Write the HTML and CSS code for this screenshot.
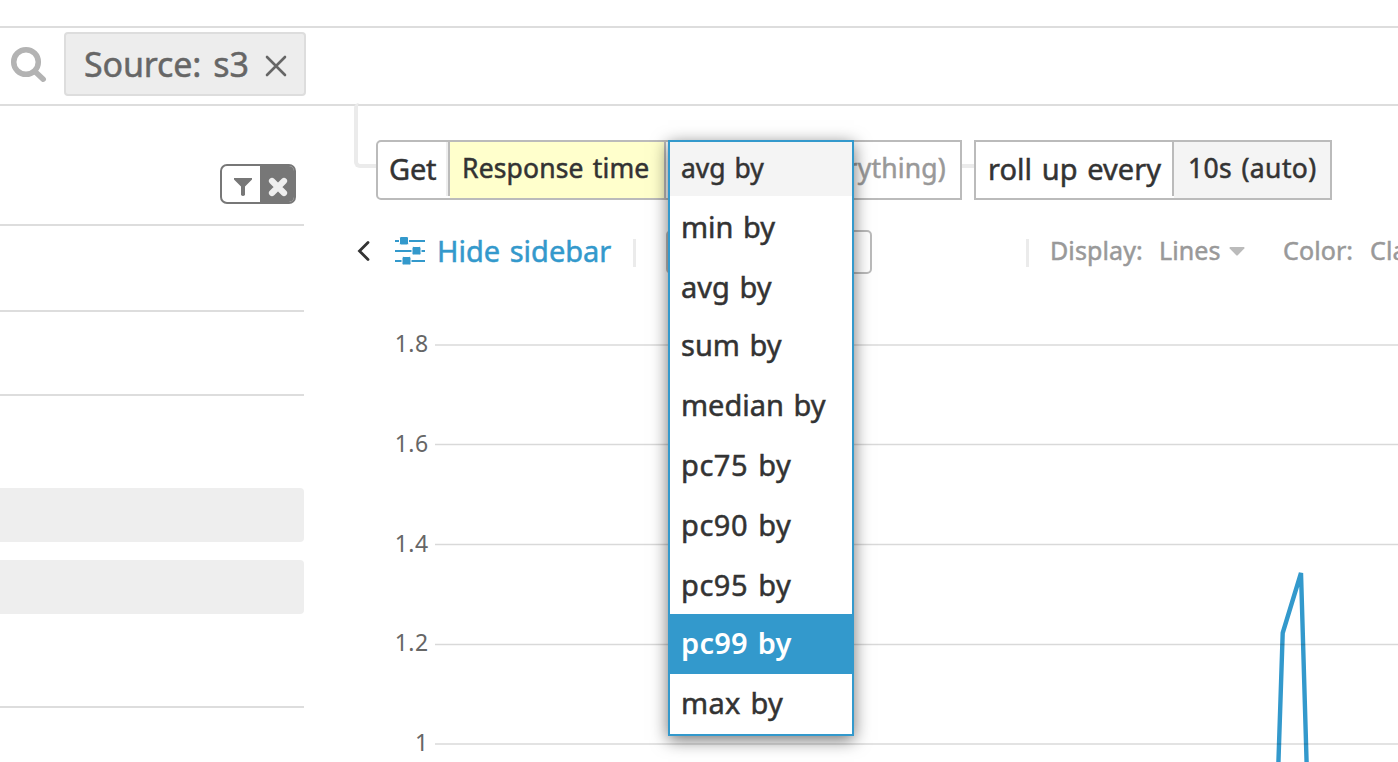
FILE: index.html
```html
<!DOCTYPE html>
<html lang="en">
<head>
<meta charset="utf-8">
<title>Metric query editor</title>
<link rel="stylesheet" href="styles.css">
</head>
<body>
<div class="page">
  <header class="searchbar">
    <svg class="search-icon" width="38" height="38" viewBox="0 0 38 38"><circle cx="16" cy="16" r="12.3"/><path d="M25 25.500L33.200 33.200"/></svg>
    <div class="tag"><span class="tag-text">Source: s3</span>
      <svg class="tag-close" width="22" height="22" viewBox="0 0 22 22"><path d="M2 2L20 20M20 2L2 20"/></svg>
    </div>
  </header>
  <div class="content">
    <aside class="sidebar">
      <div class="facet facet-head">
        <div class="toggle">
          <div class="toggle-filter"><svg width="20" height="20" viewBox="0 0 20 20"><path d="M1 1h18v1.500l-7 7v8.500q-2 1.800-4 0V9.500l-7-7z"/></svg></div>
          <div class="toggle-clear"><svg width="20" height="20" viewBox="0 0 20 20"><path d="M4 4L16 16M16 4L4 16"/></svg></div>
        </div>
      </div>
      <div class="facet facet-a"></div>
      <div class="facet facet-b"></div>
      <div class="facet facet-list"><div class="bar"></div><div class="bar"></div></div>
    </aside>
    <main class="main">
      <div class="bracket"></div>
      <div class="query">
        <div class="group group-get">
          <div class="cell cell-get"><span class="t-get">Get</span></div>
          <div class="cell cell-metric"><span class="t-metric">Response time</span></div>
          <div class="cell cell-scope"><span class="t-scope">(everything)</span></div>
        </div>
        <div class="link"></div>
        <div class="group group-roll">
          <div class="cell cell-roll"><span class="t-roll">roll up every</span></div>
          <div class="cell cell-auto"><span class="t-auto">10s (auto)</span></div>
        </div>
        <div class="menu">
          <div class="current">avg by</div>
          <div class="item i-min">min by</div>
          <div class="item i-avg">avg by</div>
          <div class="item i-sum">sum by</div>
          <div class="item i-med">median by</div>
          <div class="item i-pc">pc75 by</div>
          <div class="item i-pc">pc90 by</div>
          <div class="item i-pc">pc95 by</div>
          <div class="item active">pc99 by</div>
          <div class="item i-max">max by</div>
        </div>
      </div>
      <div class="tools">
        <svg class="chevron" width="14" height="20" viewBox="0 0 14 20"><path d="M11 1.500L2.500 10L11 18.500"/></svg>
        <svg class="sliders" width="30" height="28" viewBox="0 0 30 28"><path d="M0 4h30M0 14h30M0 24h30" stroke="#39c" stroke-width="2"/><g fill="#39c" stroke="#fff" stroke-width="1"><rect x="4.500" y="-.5" width="9" height="8.500" rx="1.500"/><rect x="17" y="9.500" width="9" height="8.500" rx="1.500"/><rect x="7" y="19.500" width="9" height="8.500" rx="1.500"/></g></svg>
        <span class="t-hide">Hide sidebar</span>
        <i class="divider"></i>
        <div class="field"></div>
        <i class="divider divider-right"></i>
        <span class="t-display">Display:</span>
        <span class="t-lines">Lines</span>
        <svg class="caret" width="16" height="9" viewBox="0 0 16 9"><path d="M1 0h14q1 .5.300 1.500L8.500 8.500h-1L.7 1.500Q0 .5 1 0z"/></svg>
        <span class="t-color">Color:</span>
        <span class="t-classic">Classic</span>
      </div>
      <svg class="chart" width="1044" height="482" viewBox="354 280 1044 482">
        <path class="series" d="M1278.300 766L1282.700 633L1301 573L1306.700 766"/>
        <path class="grid" d="M435 345h963M435 444.500h963M435 544.500h963M435 644.500h963M435 744h963"/>
        <g class="axis">
          <text x="428.500" y="352">1.8</text>
          <text x="428.500" y="452">1.6</text>
          <text x="428.500" y="552">1.4</text>
          <text x="428.500" y="651">1.2</text>
          <text x="428.500" y="751">1</text>
        </g>
      </svg>
    </main>
  </div>
</div>
</body>
</html>
```
FILE: styles.css
```css
* { box-sizing: border-box; }
body { margin: 0; background: #fff; font-family: "Noto Sans", "Open Sans", sans-serif; color: #333; -webkit-text-stroke: 0.5px currentColor; }
svg { display: block; flex: none; }
.page { width: 1398px; height: 762px; overflow: hidden; padding-top: 26px; }
.searchbar { height: 80px; border-top: 2px solid #ddd; border-bottom: 2px solid #ddd; display: flex; padding: 4px 0 0 10px; }
.search-icon { margin-top: 14px; fill: none; stroke: #b3b3b3; stroke-width: 5.5; stroke-linecap: round; }
.tag { margin-left: 16px; width: 242px; height: 64px; border: 2px solid #ddd; border-radius: 4px; background: #ededed; display: flex; align-items: center; padding-left: 18px; color: #666; }
.tag-text { width: 181px; font-size: 34px; line-height: 60px; letter-spacing: -0.15px; word-spacing: 3.5px; white-space: nowrap; }
.tag-close { margin-top: 4px; fill: none; stroke: #666; stroke-width: 2.6; stroke-linecap: round; }
.content { display: flex; height: 656px; }
.sidebar { width: 304px; flex: none; }
.facet { border-bottom: 2px solid #ddd; }
.facet-head { height: 120px; padding: 58px 8px 0 0; display: flex; justify-content: flex-end; align-items: flex-start; }
.facet-a { height: 86px; }
.facet-b { height: 84px; }
.facet-list { height: 312px; padding-top: 92px; display: flex; flex-direction: column; gap: 18px; }
.bar { height: 54px; background: #eee; border-radius: 0 4px 4px 0; }
.toggle { display: flex; width: 76px; height: 40px; border: 2px solid #777; border-radius: 7px; overflow: hidden; }
.toggle-filter { width: 38px; padding: 11px 0 0 11px; fill: #777; }
.toggle-clear { flex: 1; background: #777; padding: 11px 0 0 8px; stroke: #eee; stroke-width: 6.2; stroke-linecap: round; }
.main { width: 1044px; margin-left: 50px; flex: none; }
.bracket { width: 24px; height: 65px; margin-top: -3px; border: solid #ebebeb; border-width: 0 0 4px 4px; border-radius: 5px 0 0 6px; }
.query { position: relative; display: flex; margin: -28px 0 0 22px; height: 60px; }
.group { height: 60px; border: 2px solid #bbb; background: #fff; display: flex; white-space: nowrap; }
.group-get { width: 586px; border-radius: 5px 0 0 5px; }
.group-roll { width: 358px; }
.cell { height: 56px; line-height: 56px; }
.cell-get { width: 72px; height: 54px; border-right: 2px solid #bbb; box-shadow: inset -2px 0 #eee; padding-left: 11px; font-size: 29px; line-height: 54px; letter-spacing: -.2px; }
.cell-metric { width: 216px; background: #ffc; border-right: 2px solid #bbb; padding-left: 12px; font-size: 26.500px; line-height: 53px; letter-spacing: .15px; word-spacing: 2px; }
.cell-scope { flex: 1; text-align: right; padding-right: 14px; color: #999; font-size: 26.500px; line-height: 53px; letter-spacing: .2px; }
.cell-roll { width: 198px; height: 54px; border-right: 2px solid #bbb; padding-left: 12px; font-size: 29px; line-height: 54px; letter-spacing: .05px; word-spacing: 2px; }
.cell-auto { flex: 1; background: #f4f4f4; padding-left: 14px; font-size: 26.500px; line-height: 53px; letter-spacing: .4px; word-spacing: 2px; }
.link { width: 12px; height: 4px; margin-top: 24px; background: #ebebeb; }
.menu { position: absolute; left: 292px; top: 0; width: 186px; height: 596px; border: 2px solid #39c; background: #fff; box-shadow: 0 4px 16px rgba(0,0,0,.55); z-index: 2; white-space: nowrap; }
.current { height: 54px; line-height: 52px; padding-left: 11px; background: #f4f4f4; font-size: 26.500px; word-spacing: 2px; }
.item { height: 60px; line-height: 62px; padding-left: 11px; font-size: 29px; word-spacing: 2px; }
.i-avg { height: 58px; }
.i-pc { letter-spacing: .55px; }
.active { background: #39c; color: #fff; font-weight: 600; line-height: 57px; -webkit-text-stroke: 0; letter-spacing: .25px; }
.i-max { line-height: 57px; letter-spacing: .3px; }
.tools { display: flex; height: 44px; margin-top: 30px; white-space: nowrap; }
.tools > * { flex: none; }
.chevron { margin: 11px 0 0 3px; fill: none; stroke: #333; stroke-width: 2.8; stroke-linecap: round; }
.sliders { margin: 7px 0 0 24px; }
.t-hide { margin-left: 12px; width: 196px; color: #39c; font-size: 29px; line-height: 41px; letter-spacing: 0; word-spacing: 2px; }
.divider { width: 3px; height: 28px; margin-top: 9px; background: #ebebeb; }
.field { width: 206px; height: 44px; margin-left: 30px; border: 2px solid #bbb; border-radius: 5px; }
.divider-right { margin-left: 154px; }
.t-display, .t-lines, .t-color, .t-classic { color: #999; font-size: 25px; line-height: 40px; letter-spacing: .1px; }
.t-display { margin-left: 21px; width: 109px; }
.t-lines { width: 70px; }
.caret { margin-top: 17px; fill: #bbb; }
.t-color { margin-left: 38px; width: 87px; }
.chart { margin-top: 6px; }
.series { fill: none; stroke: #39c; stroke-width: 4.4; stroke-linejoin: bevel; }
.grid { stroke: rgba(0,0,0,.15); stroke-width: 1.3; }
.axis { fill: #666; font-size: 23px; text-anchor: end; letter-spacing: .4px; -webkit-text-stroke: 0.5px #666; }
```
